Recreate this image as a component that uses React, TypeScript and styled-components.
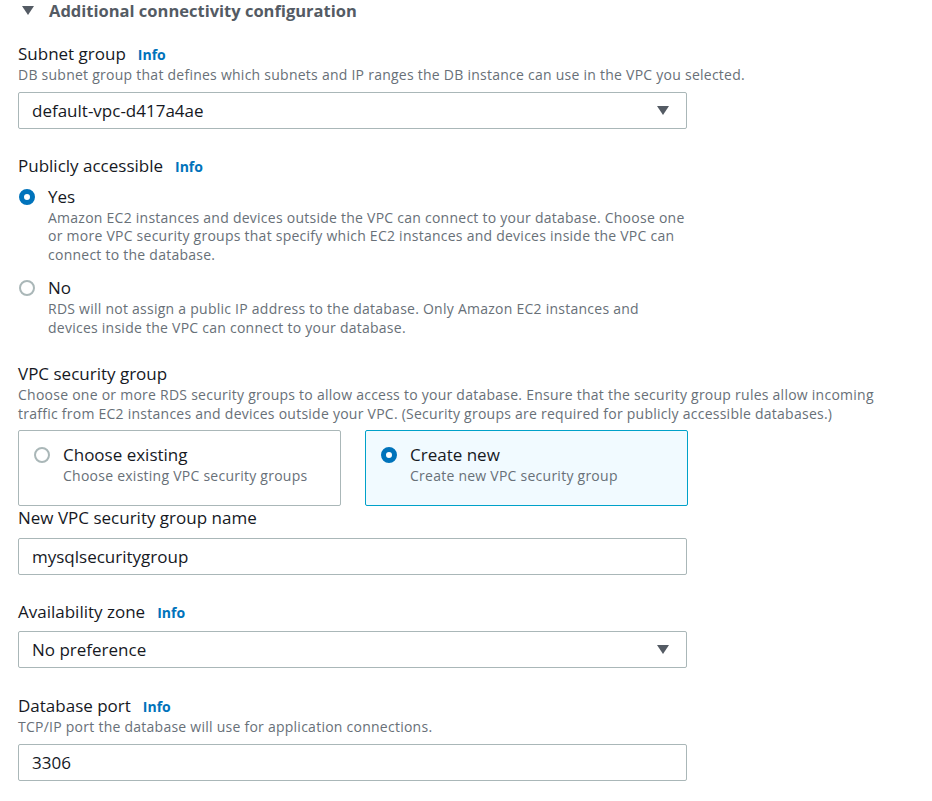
import React from "react";
import styled, { createGlobalStyle } from "styled-components";

const Global = createGlobalStyle`
  html, body { margin: 0; padding: 0; background: #ffffff; }
  body { font-family: "Open Sans", "Liberation Sans", sans-serif; color: #16191f; }
  * { box-sizing: border-box; }
`;

const Page = styled.div`
  width: 932px;
  height: 801px;
  overflow: hidden;
  padding-left: 18px;
  background: #fff;
`;

const Header = styled.div`
  display: flex;
  align-items: center;
  height: 20px;
  gap: 15px;
  padding-left: 4px;
  font-size: 16.5px;
  font-weight: 700;
  color: #545b64;
`;

const Caret = styled.span`
  width: 0;
  height: 0;
  border-left: 6px solid transparent;
  border-right: 6px solid transparent;
  border-top: 9px solid #545b64;
  margin-top: 1px;
`;

const Field = styled.div<{ $top: number }>`
  margin-top: ${(p) => p.$top}px;
  width: 669px;
`;

const Label = styled.div`
  display: flex;
  align-items: baseline;
  gap: 12px;
  font-size: 17px;
  line-height: 22px;
  height: 22px;
  color: #16191f;
`;

const Info = styled.span`
  font-size: 14px;
  font-weight: 700;
  color: #0073bb;
`;

const Desc = styled.div`
  margin-top: 1px;
  font-size: 14px;
  letter-spacing: 0.25px;
  line-height: 18.5px;
  color: #687078;
  white-space: nowrap;
`;

const Box = styled.div<{ $gap: number }>`
  margin-top: ${(p) => p.$gap}px;
  height: 37px;
  border: 1px solid #aab7b8;
  border-radius: 2px;
  display: flex;
  align-items: center;
  justify-content: space-between;
  padding: 0 17px 0 13px;
  font-size: 17px;
  color: #16191f;
`;

const Arrow = styled.span`
  width: 0;
  height: 0;
  border-left: 6px solid transparent;
  border-right: 6px solid transparent;
  border-top: 9px solid #545b64;
`;

const RadioRow = styled.div<{ $top: number }>`
  margin-top: ${(p) => p.$top}px;
  display: grid;
  grid-template-columns: 30px 1fr;
  align-content: start;
  width: 700px;
`;

const RadioDot = styled.span<{ $on?: boolean }>`
  width: 16px;
  height: 16px;
  border-radius: 50%;
  margin-top: 3px;
  margin-left: 1px;
  border: ${(p) => (p.$on ? "5px solid #0073bb" : "2px solid #aab7b8")};
  background: #fff;
`;

const RadioTitle = styled.div`
  font-size: 17px;
  line-height: 22px;
  color: #16191f;
`;

const RadioDesc = styled.div`
  grid-column: 2;
  margin-top: 1px;
  font-size: 14px;
  letter-spacing: 0.25px;
  line-height: 18.5px;
  color: #687078;
  white-space: nowrap;
`;

const Tiles = styled.div`
  margin-top: 7px;
  display: grid;
  grid-template-columns: 323px 323px;
  gap: 24px;
`;

const Tile = styled.div<{ $on?: boolean }>`
  height: 76px;
  border: 1px solid ${(p) => (p.$on ? "#00a1c9" : "#aab7b8")};
  background: ${(p) => (p.$on ? "#f1faff" : "#fff")};
  border-radius: 2px;
  padding: 13px 0 0 14px;
  display: grid;
  grid-template-columns: 30px 1fr;
  align-content: start;
`;

const TileDesc = styled.div`
  grid-column: 2;
  margin-top: 1px;
  font-size: 14px;
  letter-spacing: 0.25px;
  line-height: 18px;
  color: #687078;
`;

export default function App() {
  return (
    <Page>
      <Global />
      <Header>
        <Caret />
        <span>Additional connectivity configuration</span>
      </Header>

      <Field $top={23}>
        <Label>
          Subnet group <Info>Info</Info>
        </Label>
        <Desc>DB subnet group that defines which subnets and IP ranges the DB instance can use in the VPC you selected.</Desc>
        <Box $gap={7}>
          <span>default-vpc-d417a4ae</span>
          <Arrow />
        </Box>
      </Field>

      <Field $top={26}>
        <Label>
          Publicly accessible <Info>Info</Info>
        </Label>
      </Field>
      <RadioRow $top={9}>
        <RadioDot $on />
        <RadioTitle>Yes</RadioTitle>
        <RadioDesc>
          Amazon EC2 instances and devices outside the VPC can connect to your database. Choose one
          <br />
          or more VPC security groups that specify which EC2 instances and devices inside the VPC can
          <br />
          connect to the database.
        </RadioDesc>
      </RadioRow>
      <RadioRow $top={13}>
        <RadioDot />
        <RadioTitle>No</RadioTitle>
        <RadioDesc>
          RDS will not assign a public IP address to the database. Only Amazon EC2 instances and
          <br />
          devices inside the VPC can connect to your database.
        </RadioDesc>
      </RadioRow>

      <Field $top={26}>
        <Label>VPC security group</Label>
        <Desc>
          Choose one or more RDS security groups to allow access to your database. Ensure that the security group rules allow incoming
          <br />
          traffic from EC2 instances and devices outside your VPC. (Security groups are required for publicly accessible databases.)
        </Desc>
      </Field>
      <Tiles>
        <Tile>
          <RadioDot />
          <RadioTitle>Choose existing</RadioTitle>
          <TileDesc>Choose existing VPC security groups</TileDesc>
        </Tile>
        <Tile $on>
          <RadioDot $on />
          <RadioTitle>Create new</RadioTitle>
          <TileDesc>Create new VPC security group</TileDesc>
        </Tile>
      </Tiles>

      <Field $top={1}>
        <Label>New VPC security group name</Label>
        <Box $gap={9}>
          <span>mysqlsecuritygroup</span>
        </Box>
      </Field>

      <Field $top={26}>
        <Label>
          Availability zone <Info>Info</Info>
        </Label>
        <Box $gap={8}>
          <span>No preference</span>
          <Arrow />
        </Box>
      </Field>

      <Field $top={27}>
        <Label>
          Database port <Info>Info</Info>
        </Label>
        <Desc>TCP/IP port the database will use for application connections.</Desc>
        <Box $gap={7}>
          <span>3306</span>
        </Box>
      </Field>
    </Page>
  );
}
